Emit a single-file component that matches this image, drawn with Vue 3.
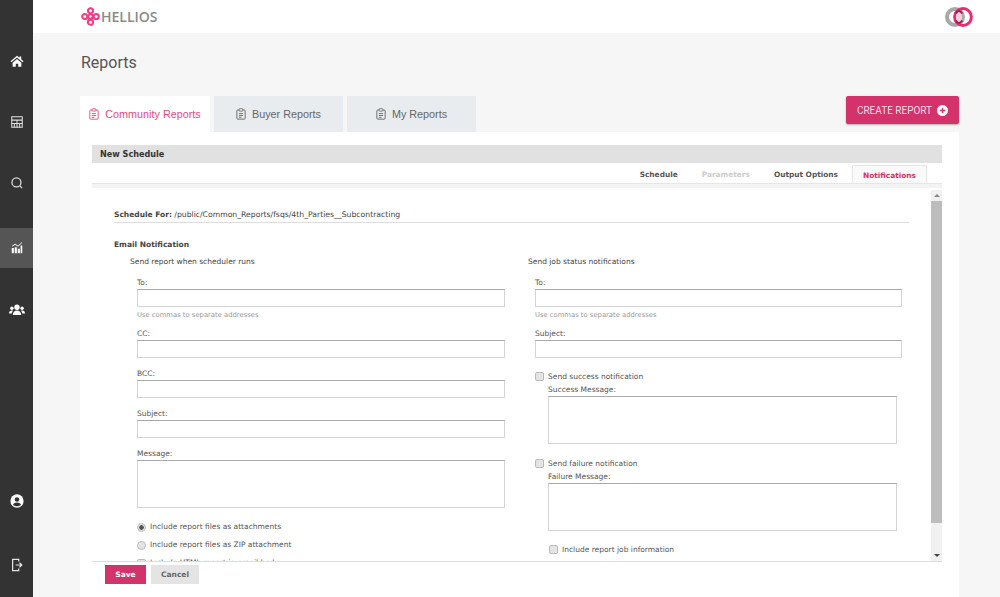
<template>
  <div class="app">
    <aside class="sidebar">
      <nav class="nav-top">
        <a v-for="item in navItems" :key="item.id" class="nav-item" :class="[item.id, { active: item.id === 'chart' }]">
          <svg viewBox="0 0 16 16" v-html="item.icon"></svg>
        </a>
      </nav>
      <nav class="nav-bottom">
        <a class="nav-item">
          <svg class="big" viewBox="0 0 16 16">
            <circle cx="8" cy="8" r="7.6" fill="#fff" />
            <circle cx="8" cy="6.2" r="2.6" fill="#333" />
            <path d="M3.4 12.4c.8-2 2.6-2.8 4.6-2.8s3.800.8 4.600 2.800c-1.200 1.100-2.900 1.700-4.600 1.700s-3.400-.6-4.600-1.700z" fill="#333" />
          </svg>
        </a>
        <a class="nav-item">
          <svg class="big" viewBox="0 0 16 16" fill="none" stroke="#e4e4e4" stroke-width="1.4">
            <path d="M10 4V1.500H3v13h7V12" />
            <path d="M6.500 8h6.500M10.800 5.500 13.500 8l-2.700 2.500" />
          </svg>
        </a>
      </nav>
    </aside>

    <div class="main">
      <header class="topbar">
        <div class="logo">
          <svg viewBox="0 0 20 20" width="19" height="19" fill="none" stroke="#ee3f86" stroke-width="2.2">
            <circle cx="10" cy="4" r="2.7" />
            <circle cx="10" cy="16" r="2.7" />
            <circle cx="4" cy="10" r="2.7" />
            <circle cx="16" cy="10" r="2.7" />
            <circle cx="10" cy="10" r="2.3" />
          </svg>
          <span>HELLIOS</span>
        </div>
        <svg class="brand" viewBox="0 0 30 22" width="30" height="22" fill="none">
          <circle cx="11" cy="11" r="8" stroke="#a9a9a9" stroke-width="4" />
          <circle cx="19" cy="11" r="8.4" stroke="#ec2a72" stroke-width="3" />
          <path d="M15 4.500a8.400 8.400 0 0 1 0 13 8.400 8.400 0 0 1 0-13z" fill="#f0d0dc" />
          <path d="M11.800 7.500Q15 2.500 18.200 7.500M11.800 14.500Q15 19.500 18.200 14.500" stroke="#8d2650" stroke-width="2" />
        </svg>
      </header>

      <div class="page">
        <h1>Reports</h1>
        <div class="tabs-row">
          <div class="tabs">
            <a v-for="tab in reportTabs" :key="tab" class="tab" :class="{ current: tab === 'Community Reports' }">
              <svg viewBox="0 0 12 14" width="10" height="12" fill="none" stroke="currentColor" stroke-width="1.1">
                <rect x="1" y="2.2" width="10" height="11" rx="1.2" />
                <rect x="3.800" y=".7" width="4.400" height="2.800" rx=".6" fill="#fff" />
                <path d="M3.500 6.500h5M3.500 8.800h5M3.500 11h3" />
              </svg>
              {{ tab }}
            </a>
          </div>
          <button class="create">
            CREATE REPORT
            <svg viewBox="0 0 12 12" width="11" height="11">
              <circle cx="6" cy="6" r="6" fill="#fff" />
              <path d="M6 3v6M3 6h6" stroke="#d4326a" stroke-width="1.5" />
            </svg>
          </button>
        </div>

        <section class="panel">
          <div class="title-bar">New Schedule</div>
          <div class="steps">
            <a v-for="step in steps" :key="step" class="step" :class="stepClass(step)">{{ step }}</a>
          </div>

          <div class="scroll-area">
            <div class="form">
              <div class="schedule-for"><b>Schedule For:</b> <span>/public/Common_Reports/fsqs/4th_Parties__Subcontracting</span></div>
              <div class="email-title">Email Notification</div>
              <div class="columns">
                <div class="col-left">
                  <p class="col-head">Send report when scheduler runs</p>
                  <div class="fields">
                    <label>To:</label>
                    <input type="text" />
                    <small>Use commas to separate addresses</small>
                    <label class="next">CC:</label>
                    <input type="text" />
                    <label class="next">BCC:</label>
                    <input type="text" />
                    <label class="next">Subject:</label>
                    <input type="text" />
                    <label class="next">Message:</label>
                    <textarea></textarea>
                    <div class="opt first"><input type="radio" name="att" checked />Include report files as attachments</div>
                    <div class="opt"><input type="radio" name="att" />Include report files as ZIP attachment</div>
                    <div class="opt"><input type="checkbox" />Include HTML report in email body</div>
                  </div>
                </div>
                <div class="col-right">
                  <p class="col-head">Send job status notifications</p>
                  <div class="fields">
                    <label>To:</label>
                    <input type="text" />
                    <small>Use commas to separate addresses</small>
                    <label class="next">Subject:</label>
                    <input type="text" />
                    <div class="opt status"><input type="checkbox" />Send success notification</div>
                    <div class="indented">
                      <label>Success Message:</label>
                      <textarea></textarea>
                    </div>
                    <div class="opt status"><input type="checkbox" />Send failure notification</div>
                    <div class="indented">
                      <label>Failure Message:</label>
                      <textarea></textarea>
                    </div>
                    <div class="opt job"><input type="checkbox" />Include report job information</div>
                  </div>
                </div>
              </div>
            </div>
            <div class="scrollbar">
              <span class="arrow up"></span>
              <span class="thumb"></span>
              <span class="arrow down"></span>
            </div>
          </div>

          <div class="actions">
            <button class="save">Save</button>
            <button class="cancel">Cancel</button>
          </div>
        </section>
      </div>
    </div>
  </div>
</template>

<script setup>
const navItems = [
  { id: 'home', icon: '<path fill="#fff" d="M8 2 .6 8.300l1 1.100L8 4l6.400 5.400 1-1.100L12.800 6V2.800h-2v1.500zM3 10v4.500h3.600v-3.300h2.800v3.300H13V10L8 5.700z"/>' },
  { id: 'table', icon: '<g fill="none" stroke="#ddd" stroke-width="1.400"><rect x="1" y="1" width="14" height="14"/><path d="M1 5.500h14M8 5.500V15M1 10h14M4.500 10v5M11.500 10v5"/></g>' },
  { id: 'search', icon: '<g fill="none" stroke="#ddd" stroke-width="1.700"><circle cx="7.300" cy="7.300" r="6"/><path d="m11.800 11.800 3 3"/></g>' },
  { id: 'chart', icon: '<path fill="#fff" d="M1 8h2.800v7H1zM5 7h2.800v8H5zM9 9h2.800v6H9zM12.800 4.500H15V15h-2.200z"/><path fill="none" stroke="#fff" stroke-width="1.300" d="m1.500 5.500 4-2.500 4 2.500L14.500.8"/>' },
  { id: 'users', icon: '<g fill="#fff"><circle cx="8" cy="5.300" r="2.700"/><circle cx="2.900" cy="6.200" r="1.700"/><circle cx="13.100" cy="6.200" r="1.700"/><path d="M3.800 13c0-3 1.700-4.500 4.200-4.500s4.200 1.500 4.200 4.500zM0 11.500C0 9.500 1 8.500 2.800 8.500c.5 0 .9.100 1.200.2-.8.800-1.200 1.800-1.300 2.800zM16 11.500c0-2-1-3-2.800-3-.5 0-.9.100-1.200.2.800.8 1.200 1.800 1.300 2.800z"/></g>' }
]

const reportTabs = ['Community Reports', 'Buyer Reports', 'My Reports']
const steps = ['Schedule', 'Parameters', 'Output Options', 'Notifications']

const stepClass = (step) => ({
  disabled: step === 'Parameters',
  selected: step === 'Notifications'
})
</script>

<style>
html, body { margin: 0; padding: 0; }
</style>

<style scoped>
.app {
  display: flex;
  width: 1000px;
  height: 597px;
  overflow: hidden;
  background: #f6f6f6;
  font-family: "DejaVu Sans", Verdana, sans-serif;
}
.sidebar {
  width: 33px;
  flex: none;
  background: #333;
  display: flex;
  flex-direction: column;
  justify-content: space-between;
  padding: 41px 0 12px;
  box-sizing: border-box;
}
.nav-top, .nav-bottom {
  display: flex;
  flex-direction: column;
}
.nav-top { gap: 21px; }
.nav-bottom { gap: 24px; }
.nav-item {
  height: 40px;
  display: flex;
  align-items: center;
  justify-content: center;
}
.nav-item svg { width: 12px; height: 12px; }
.nav-item svg.big { width: 14px; height: 14px; }
.nav-item.home svg { width: 14px; height: 14px; }
.nav-item.users svg { width: 16px; height: 16px; }
.nav-item.active { background: #555; margin-top: 4px; }
.nav-item.users { margin-top: 1px; }

.main {
  flex: 1;
  display: flex;
  flex-direction: column;
  min-width: 0;
}
.topbar {
  height: 33px;
  flex: none;
  background: #fff;
  display: flex;
  align-items: center;
  justify-content: space-between;
  padding: 0 26px 0 48px;
}
.logo {
  display: flex;
  align-items: center;
  gap: 1px;
  font-family: "Open Sans", sans-serif;
  font-weight: 600;
  font-size: 14px;
  color: #8b8b8b;
}
.brand { display: block; }

.page {
  flex: 1;
  display: flex;
  flex-direction: column;
  padding: 0 41px 0 47px;
  min-height: 0;
}
h1 {
  margin: 20px 0 0 1px;
  height: 43px;
  font: 400 16px/20px Roboto, sans-serif;
  color: #555;
}
.tabs-row {
  display: flex;
  justify-content: space-between;
  align-items: flex-start;
  height: 36px;
  flex: none;
}
.tabs { display: flex; gap: 4px; }
.tab {
  width: 129px;
  height: 36px;
  display: flex;
  align-items: center;
  justify-content: center;
  gap: 6px;
  background: #e9ecee;
  color: #666;
  font: 10.8px "Liberation Sans", Arial, sans-serif;
}
.tab.current {
  width: 130px;
  background: #fff;
  color: #e34b7f;
}
.create {
  width: 113px;
  height: 28px;
  padding: 0;
  border: 0;
  border-radius: 2px;
  background: #d4326a;
  color: #f6dce6;
  box-shadow: 0 1px 2px rgba(0, 0, 0, .3);
  font: 400 10px Roboto, sans-serif;
  display: flex;
  align-items: center;
  justify-content: center;
  gap: 5px;
}

.panel {
  flex: 1;
  min-height: 0;
  background: #fff;
  padding: 13px 17px 0 12px;
  display: flex;
  flex-direction: column;
}
.title-bar {
  height: 18px;
  flex: none;
  padding-left: 8px;
  background: #e1e1e1;
  color: #333;
  font-size: 8.1px;
  font-weight: 700;
  line-height: 18px;
}
.steps {
  height: 18px;
  margin-top: 2px;
  flex: none;
  display: flex;
  justify-content: flex-end;
  padding-right: 15px;
  border-bottom: 1px solid #e6e6e6;
}
.step {
  display: flex;
  align-items: center;
  padding: 0 12px;
  font-size: 7.4px;
  font-weight: 700;
  color: #555;
}
.step.disabled { color: #ccc; }
.step.selected {
  width: 75px;
  box-sizing: border-box;
  padding: 1px 0 0;
  justify-content: center;
  margin-left: 2px;
  background: #fafafa;
  border: 1px solid #e6e6e6;
  border-bottom: 0;
  color: #d4326a;
}

.scroll-area {
  flex: 1;
  min-height: 0;
  display: flex;
  border-top: 4px solid #f3f3f3;
  border-bottom: 1px solid #ddd;
  overflow: hidden;
}
.form {
  flex: 1;
  min-width: 0;
  overflow: hidden;
  padding: 22px 0 0 22px;
  color: #555;
  font-size: 7.5px;
  line-height: 10px;
}
.schedule-for {
  width: 795px;
  height: 12px;
  border-bottom: 1px solid #ddd;
  color: #444;
}
.schedule-for span { font-size: 7.7px; }
.email-title {
  margin-top: 17px;
  font-weight: 700;
  color: #444;
}
.columns { display: flex; }
.col-left { width: 414px; padding-left: 16px; box-sizing: border-box; }
.col-right { flex: 1; }
.col-head { margin: 7px 0 0; height: 21px; line-height: 10px; color: #444; }
.fields {
  display: flex;
  flex-direction: column;
  align-items: flex-start;
  padding-left: 7px;
}
label { display: block; height: 11px; line-height: 10px; }
.fields input[type="text"], textarea {
  box-sizing: border-box;
  margin: 0;
  background: #fff;
  border: 1px solid #d4d4d4;
  border-top-color: #a8a8a8;
}
.fields input[type="text"] {
  width: 368px;
  height: 18px;
}
.col-right .fields input[type="text"] { width: 367px; margin-left: -.5px; }
textarea {
  display: block;
  width: 368px;
  height: 48px;
  resize: none;
}
small {
  display: block;
  height: 10px;
  margin-top: 3px;
  font-size: 6.8px;
  color: #999;
  line-height: 10px;
}
.next { margin-top: 11px; }
small + .next { margin-top: 9px; }
.opt {
  display: flex;
  align-items: center;
  gap: 4px;
  height: 18px;
}
.opt.first { margin-top: 10px; }
.opt.status { margin-top: 12px; height: 13px; }
.indented + .opt.status { margin-top: 13px; }
.opt.job { margin-top: 12px; margin-left: 14px; height: 13px; }
.opt input {
  appearance: none;
  width: 7px;
  height: 7px;
  margin: 0;
  flex: none;
  background: #e4e4e4;
  border: 1px solid #bbb;
  box-sizing: content-box;
}
.opt input[type="radio"] { border-radius: 50%; }
.opt input[type="checkbox"] { border-radius: 2px; }
.opt input:checked { background: radial-gradient(circle, #555 0 2px, #e4e4e4 2.5px); }
.indented { padding-left: 13px; margin-top: 2px; }
.indented textarea { width: 349px; }

.scrollbar {
  width: 11px;
  flex: none;
  margin-top: 2px;
  background: #f1f1f1;
  display: flex;
  flex-direction: column;
  align-items: center;
}
.arrow { width: 0; height: 0; border: 3px solid transparent; }
.arrow.up { border-bottom-color: #888; border-top-width: 0; margin: 4px 0 4px; }
.arrow.down { border-top-color: #444; border-bottom-width: 0; margin-top: auto; margin-bottom: 4px; }
.thumb { width: 100%; height: 322px; background: #bdbdbd; }

.actions {
  height: 35px;
  flex: none;
  display: flex;
  gap: 5px;
  padding: 3px 0 0 13px;
  box-sizing: border-box;
}
.actions button {
  height: 19px;
  padding: 0;
  border: 0;
  font-family: "DejaVu Sans", Verdana, sans-serif;
  font-size: 7.5px;
  font-weight: 700;
}
.save { width: 41px; background: #d4326a; color: #fff; }
.cancel { width: 48px; background: #e4e4e4; color: #666; }
</style>
